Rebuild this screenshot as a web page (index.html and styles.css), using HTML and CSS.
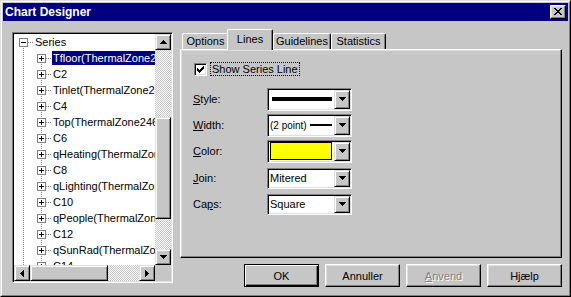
FILE: index.html
```html
<!DOCTYPE html>
<html lang="da">
<head>
    <meta charset="UTF-8">
    <title>Chart Designer</title>
    <link rel="stylesheet" href="styles.css">
</head>
<body>
<div class="window">
  <div class="frame">
    <div class="titlebar">
      <span class="title">Chart Designer</span>
      <button class="close-btn" aria-label="Luk">
        <svg width="8" height="7" viewBox="0 0 8 7" shape-rendering="crispEdges"><path d="M0 0h2v1H0z M6 0h2v1H6z M1 1h2v1H1z M5 1h2v1H5z M2 2h4v1H2z M3 3h2v1H3z M2 4h4v1H2z M1 5h2v1H1z M5 5h2v1H5z M0 6h2v1H0z M6 6h2v1H6z" fill="#000"/></svg>
      </button>
    </div>

    <div class="main">
      <div class="tree-view">
        <div class="tree-body">
          <div class="tree-row root"><span class="exp"></span><span class="hdots"></span><span class="label">Series</span></div>
          <div class="tree-children">
            <div class="tree-row first"><span class="exp plus"></span><span class="hdots"></span><span class="label selected">Tfloor(ThermalZone2460)</span></div>
            <div class="tree-row"><span class="exp plus"></span><span class="hdots"></span><span class="label">C2</span></div>
            <div class="tree-row"><span class="exp plus"></span><span class="hdots"></span><span class="label">Tinlet(ThermalZone2460)</span></div>
            <div class="tree-row"><span class="exp plus"></span><span class="hdots"></span><span class="label">C4</span></div>
            <div class="tree-row"><span class="exp plus"></span><span class="hdots"></span><span class="label">Top(ThermalZone2460)</span></div>
            <div class="tree-row"><span class="exp plus"></span><span class="hdots"></span><span class="label">C6</span></div>
            <div class="tree-row"><span class="exp plus"></span><span class="hdots"></span><span class="label">qHeating(ThermalZone2460)</span></div>
            <div class="tree-row"><span class="exp plus"></span><span class="hdots"></span><span class="label">C8</span></div>
            <div class="tree-row"><span class="exp plus"></span><span class="hdots"></span><span class="label">qLighting(ThermalZone2460)</span></div>
            <div class="tree-row"><span class="exp plus"></span><span class="hdots"></span><span class="label">C10</span></div>
            <div class="tree-row"><span class="exp plus"></span><span class="hdots"></span><span class="label">qPeople(ThermalZone2460)</span></div>
            <div class="tree-row"><span class="exp plus"></span><span class="hdots"></span><span class="label">C12</span></div>
            <div class="tree-row"><span class="exp plus"></span><span class="hdots"></span><span class="label">qSunRad(ThermalZone2460)</span></div>
            <div class="tree-row"><span class="exp plus"></span><span class="hdots"></span><span class="label">C14</span></div>
          </div>
        </div>
        <div class="vscroll">
          <div class="arrow"><svg width="7" height="4" viewBox="0 0 7 4" shape-rendering="crispEdges"><path d="M3 0h1v1h1v1h1v1h1v1H0V3h1V2h1V1h1z"/></svg></div>
          <div class="track before"></div>
          <div class="thumb"></div>
          <div class="track fill"></div>
          <div class="arrow"><svg width="7" height="4" viewBox="0 0 7 4" shape-rendering="crispEdges"><path d="M0 0h7v1H6v1H5v1H4v1H3V3H2V2H1V1H0z"/></svg></div>
        </div>
        <div class="hscroll">
          <div class="arrow"><svg width="4" height="7" viewBox="0 0 4 7" shape-rendering="crispEdges"><path d="M3 0h1v7H3V6H2V5H1V4H0V3h1V2h1V1h1z"/></svg></div>
          <div class="thumb"></div>
          <div class="track fill"></div>
          <div class="arrow"><svg width="4" height="7" viewBox="0 0 4 7" shape-rendering="crispEdges"><path d="M0 0h1v1h1v1h1v1h1v1H3v1H2v1H1v1H0z"/></svg></div>
        </div>
        <div class="corner"></div>
      </div>

      <div class="right">
        <div class="tabs">
          <div class="tab options">Options</div>
          <div class="tab lines active">Lines</div>
          <div class="tab guidelines">Guidelines</div>
          <div class="tab statistics">Statistics</div>
        </div>

        <div class="panel">
          <div class="check-row">
            <span class="checkbox">
              <svg width="7" height="7" viewBox="0 0 7 7" shape-rendering="crispEdges"><path d="M6 0h1v1H6z M5 1h2v1H5z M0 2h1v1H0z M4 2h3v1H4z M0 3h2v1H0z M3 3h3v1H3z M0 4h5v1H0z M1 5h3v1H1z M2 6h1v1H2z"/></svg>
            </span>
            <label class="focus">Show Series Line</label>
          </div>

          <div class="field-row">
            <label><u>S</u>tyle:</label>
            <div class="combo tall">
              <div class="value"><span class="thick-line"></span></div>
              <div class="drop"><svg width="7" height="4" viewBox="0 0 7 4" shape-rendering="crispEdges"><path d="M0 0h7v1H6v1H5v1H4v1H3V3H2V2H1V1H0z"/></svg></div>
            </div>
          </div>
          <div class="field-row">
            <label><u>W</u>idth:</label>
            <div class="combo tall">
              <div class="value"><span class="small">(2 point)</span><span class="thin-line"></span></div>
              <div class="drop"><svg width="7" height="4" viewBox="0 0 7 4" shape-rendering="crispEdges"><path d="M0 0h7v1H6v1H5v1H4v1H3V3H2V2H1V1H0z"/></svg></div>
            </div>
          </div>
          <div class="field-row">
            <label><u>C</u>olor:</label>
            <div class="combo tall">
              <div class="value"><span class="swatch"></span></div>
              <div class="drop"><svg width="7" height="4" viewBox="0 0 7 4" shape-rendering="crispEdges"><path d="M0 0h7v1H6v1H5v1H4v1H3V3H2V2H1V1H0z"/></svg></div>
            </div>
          </div>
          <div class="field-row join">
            <label><u>J</u>oin:</label>
            <div class="combo">
              <div class="value text">Mitered</div>
              <div class="drop"><svg width="7" height="4" viewBox="0 0 7 4" shape-rendering="crispEdges"><path d="M0 0h7v1H6v1H5v1H4v1H3V3H2V2H1V1H0z"/></svg></div>
            </div>
          </div>
          <div class="field-row">
            <label>Ca<u>p</u>s:</label>
            <div class="combo">
              <div class="value text">Square</div>
              <div class="drop"><svg width="7" height="4" viewBox="0 0 7 4" shape-rendering="crispEdges"><path d="M0 0h7v1H6v1H5v1H4v1H3V3H2V2H1V1H0z"/></svg></div>
            </div>
          </div>
        </div>

        <div class="buttons">
          <button class="btn default">OK</button>
          <button class="btn">Annuller</button>
          <button class="btn" disabled><u>A</u>nvend</button>
          <button class="btn">Hjælp</button>
        </div>
      </div>
    </div>
  </div>
</div>
</body>
</html>
```

FILE: styles.css
```css
* { box-sizing: border-box; }
body { margin: 0; font-family: "Liberation Sans", Arial, sans-serif; font-size: 11px; color: #000; background: #c6c6c6; }

.window { width: 571px; height: 297px; border: 1px solid; border-color: #dfdfdf #000 #000 #dfdfdf; background: #c6c6c6; }
.frame { height: 100%; border: 1px solid; border-color: #fff #808080 #808080 #fff; padding: 1px; display: flex; flex-direction: column; }

.titlebar { height: 18px; background: #000080; color: #fff; display: flex; align-items: center; justify-content: space-between; padding: 0 2px 0 2px; }
.title { font-weight: bold; font-size: 12px; }
.close-btn { width: 16px; height: 14px; padding: 0 0 1px 0; display: flex; align-items: center; justify-content: center; background: #c6c6c6; border: 1px solid; border-color: #fff #000 #000 #fff; box-shadow: inset -1px -1px #808080, inset 1px 1px #dfdfdf; }

.main { flex: 1; display: flex; padding: 8px 0 0 9px; }

/* tree */
.tree-view { width: 161px; height: 251px; margin-top: 3px; padding: 1px; background: #fff; border: 1px solid; border-color: #808080 #fff #fff #808080; box-shadow: inset 1px 1px #000, inset -1px -1px #dfdfdf; display: grid; grid-template-columns: 1fr 16px; grid-template-rows: 1fr 16px; }
.tree-body { overflow: hidden; background: #fff; }
.tree-row { height: 16px; display: flex; align-items: center; white-space: nowrap; }
.tree-row.root { padding-left: 5px; background: repeating-linear-gradient(to bottom, #808080 0 1px, transparent 1px 2px) 9px 12px / 1px 4px no-repeat; }
.tree-children { background: repeating-linear-gradient(to bottom, #808080 0 1px, transparent 1px 2px) 9px 0 / 1px 100% no-repeat; }
.tree-children .tree-row { padding-left: 23px; background: repeating-linear-gradient(to bottom, #808080 0 1px, transparent 1px 2px) 27px 0 / 1px 16px no-repeat; }
.tree-children .tree-row.first { background-position: 27px 8px; background-size: 1px 8px; }
.exp { width: 9px; height: 9px; flex: none; border: 1px solid #808080; background: linear-gradient(#000, #000) center / 5px 1px no-repeat, #fff; }
.exp.plus { background: linear-gradient(#000, #000) center / 1px 5px no-repeat, linear-gradient(#000, #000) center / 5px 1px no-repeat, #fff; }
.hdots { width: 6px; height: 1px; flex: none; background: repeating-linear-gradient(to right, #808080 0 1px, transparent 1px 2px); }
.label { height: 14px; line-height: 14px; padding: 0 1px; }
.label.selected { background: #000080; color: #fff; }

.vscroll { display: flex; flex-direction: column; }
.hscroll { display: flex; }
.arrow { width: 16px; height: 16px; flex: none; display: flex; align-items: center; justify-content: center; background: #c6c6c6; border: 1px solid; border-color: #dfdfdf #000 #000 #dfdfdf; box-shadow: inset 1px 1px #fff, inset -1px -1px #808080; }
.track { background: repeating-conic-gradient(#c6c6c6 0 25%, #fff 0 50%) 0 0 / 2px 2px; }
.track.fill { flex: 1; }
.vscroll .track.before { height: 67px; }
.thumb { flex: none; background: #c6c6c6; border: 1px solid; border-color: #dfdfdf #000 #000 #dfdfdf; box-shadow: inset 1px 1px #fff, inset -1px -1px #808080; }
.vscroll .thumb { height: 102px; }
.hscroll .thumb { width: 78px; }
.corner { background: #c6c6c6; }

/* right side */
.right { width: 382px; margin-left: 7px; display: flex; flex-direction: column; }
.tabs { height: 20px; display: flex; align-items: flex-end; padding-left: 2px; }
.tab { height: 16px; line-height: 14px; text-align: center; background: #c6c6c6; border: 1px solid; border-bottom: none; border-color: #fff #000 #000 #fff; border-radius: 2px 2px 0 0; box-shadow: inset -1px 0 #808080; }
.tab.options { width: 47px; }
.tab.lines { width: 46px; }
.tab.guidelines { width: 58px; }
.tab.statistics { width: 55px; }
.tab.active { height: 21px; margin: 0 0 -1px -2px; padding-top: 2px; position: relative; z-index: 1; }

.panel { height: 209px; border: 1px solid; border-color: #fff #000 #000 #fff; box-shadow: inset -1px -1px #808080, inset 1px 1px #dfdfdf; padding: 12px 0 0 12px; }

.check-row { height: 14px; display: flex; align-items: center; margin-left: 1px; }
.checkbox { width: 13px; height: 13px; display: flex; align-items: center; justify-content: center; background: #fff; border: 1px solid; border-color: #808080 #fff #fff #808080; box-shadow: inset 1px 1px #000, inset -1px -1px #dfdfdf; }
.focus { margin-left: 4px; padding: 0 1px; line-height: 12px; outline: 1px dotted #000; }

.field-row { height: 26px; display: flex; align-items: center; }
.check-row + .field-row { margin-top: 10px; }
.field-row.join { margin-top: 1px; }
.field-row label { width: 74px; }
.combo { width: 85px; height: 21px; padding: 1px; display: flex; background: #fff; border: 1px solid; border-color: #808080 #fff #fff #808080; box-shadow: inset 1px 1px #000, inset -1px -1px #dfdfdf; }
.combo.tall { height: 23px; }
.combo .value { flex: 1; display: flex; align-items: center; padding: 0 2px 0 1px; }
.combo .value.text { padding-left: 1px; }
.thick-line { flex: 1; height: 4px; margin-left: 2px; background: #000; }
.small { font-size: 10px; }
.thin-line { flex: 1; height: 2px; margin-left: 3px; background: #000; }
.swatch { flex: 1; height: 18px; background: #ffff00; border: 1px solid #000; }
.drop { width: 16px; flex: none; display: flex; align-items: center; justify-content: center; background: #c6c6c6; border: 1px solid; border-color: #dfdfdf #000 #000 #dfdfdf; box-shadow: inset 1px 1px #fff, inset -1px -1px #808080; }

.buttons { display: flex; justify-content: flex-end; gap: 6px; margin-top: 6px; }
.btn { width: 75px; height: 23px; padding: 0; font-family: inherit; font-size: 11px; color: #000; background: #c6c6c6; border: 1px solid; border-color: #fff #000 #000 #fff; box-shadow: inset -1px -1px #808080, inset 1px 1px #dfdfdf; }
.btn.default { border-color: #000; box-shadow: inset 1px 1px #fff, inset -1px -1px #000, inset -2px -2px #808080; }
.btn:disabled { color: #808080; text-shadow: 1px 1px #fff; }
```
